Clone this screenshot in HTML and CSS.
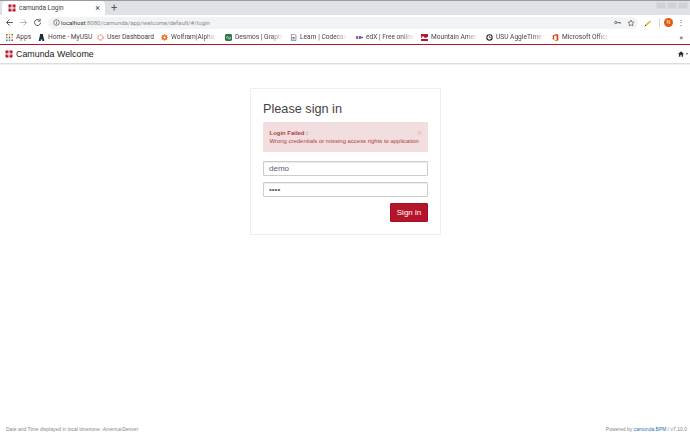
FILE: index.html
```html
<!DOCTYPE html>
<html lang="en">
<head>
<meta charset="utf-8">
<title>camunda Login</title>
<link rel="stylesheet" href="styles.css">
</head>
<body>
<div class="chrome">
  <div class="tabstrip">
    <div class="tab">
      <svg class="logo-s" viewBox="0 0 16 16"><path fill="#b5152b" d="M1 1h6v6H1zM9 1h6v6H9zM1 9h6v6H1zM9 9h6v6H9z"/><path fill="#fff" d="M5 5h2v2H5zM9 5h2v2H9zM5 9h2v2H5zM9 9h2v2H9z"/></svg>
      <span class="tab-title">camunda Login</span>
      <span class="tab-x">×</span>
    </div>
    <span class="new-tab">+</span>
    <div class="win-btns"><i></i><i></i><i></i></div>
  </div>
  <div class="toolbar">
    <svg class="nav" viewBox="0 0 12 12"><path d="M10.500 6H2M6 2 2 6l4 4" fill="none" stroke="#555" stroke-width="1.300"/></svg>
    <svg class="nav" viewBox="0 0 12 12"><path d="M1.500 6H10M6 2l4 4-4 4" fill="none" stroke="#b4b4b4" stroke-width="1.300"/></svg>
    <svg class="nav" viewBox="0 0 12 12"><path d="M10 6a4 4 0 1 1-1.200-2.800M9.500 1v3h-3" fill="none" stroke="#555" stroke-width="1.300"/></svg>
    <div class="omnibox">
      <svg class="info" viewBox="0 0 10 10"><circle cx="5" cy="5" r="4" fill="none" stroke="#555"/><path d="M5 4.500v3M5 2.500v1" stroke="#555"/></svg>
      <span class="url"><b>localhost</b>:8080/camunda/app/welcome/default/#/login</span>
      <svg class="omni-ico key" viewBox="0 0 12 8"><circle cx="3" cy="4" r="2" fill="none" stroke="#555" stroke-width="1.400"/><path d="M5 4h6M9 4v2M11 4v2" stroke="#555" stroke-width="1.200"/></svg>
      <svg class="omni-ico" viewBox="0 0 12 12"><path d="m6 1.500 1.400 3 3.200.4-2.400 2.200.6 3.200L6 8.700l-2.800 1.600.6-3.200-2.400-2.200 3.200-.4z" fill="none" stroke="#555"/></svg>
    </div>
    <svg class="pencil" viewBox="0 0 12 12"><path d="m2 10 8-7" stroke="#e2b420" stroke-width="2.400"/><path d="m1 11 2-2" stroke="#333" stroke-width="1.400"/></svg>
    <span class="sep"></span>
    <span class="avatar">N</span>
    <span class="dots">⋮</span>
  </div>
  <div class="bookmarks">
    <span class="bm bm-apps"><svg viewBox="0 0 9 9"><path fill="#d93025" d="M0 0h2v2H0z"/><path fill="#f4b400" d="M3.500 0h2v2h-2z"/><path fill="#0f9d58" d="M7 0h2v2H7z"/><path fill="#4285f4" d="M0 3.500h2v2H0z"/><path fill="#d93025" d="M3.500 3.500h2v2h-2z"/><path fill="#f4b400" d="M7 3.500h2v2H7z"/><path fill="#0f9d58" d="M0 7h2v2H0z"/><path fill="#4285f4" d="M3.500 7h2v2h-2z"/><path fill="#d93025" d="M7 7h2v2H7z"/></svg>Apps</span>
    <span class="bm bm-home"><svg viewBox="0 0 9 9"><path fill="#1d2a44" d="M2.500 0h4v2L8 8v1H5.500V7h-2v2H1V8l1.500-6z"/></svg>Home - MyUSU</span>
    <span class="bm bm-user"><svg viewBox="0 0 10 10"><circle cx="5" cy="5" r="3.700" fill="none" stroke="#e8552a" stroke-width="1.300" stroke-dasharray="3 1"/></svg>User Dashboard</span>
    <span class="bm bm-wolf"><svg viewBox="0 0 10 10"><path fill="#ef6c1a" d="m5 0 1.500 2 2.500-.5L8.500 4 10 5 8.500 6.200 9 8.500 6.500 8 5 10 3.500 8 1 8.500 1.500 6 0 5l1.500-1L1 1.500 3.500 2z"/><circle cx="5" cy="5" r="1.500" fill="#fff"/></svg><span class="fade">Wolfram|Alpha:</span></span>
    <span class="bm bm-desmos"><svg viewBox="0 0 10 10"><rect width="10" height="10" rx="2" fill="#2f7a44"/><path d="M2 6c1-3 2-3 3 0s2 1 3-2" stroke="#fff" fill="none"/></svg><span class="fade">Desmos | Graphi</span></span>
    <span class="bm bm-learn"><svg viewBox="0 0 10 10"><path d="M2 .5h5l1.500 2v7H2z" fill="#fff" stroke="#5a6a80"/><path d="M3.500 5h3M3.500 7h3" stroke="#1d2a44"/></svg><span class="fade">Learn | Codecad</span></span>
    <span class="bm bm-edx"><svg viewBox="0 0 10 6"><path d="M0 1h3v4H0z" fill="#d23f6c"/><path d="M4 1h3v4H4z" fill="#2a6cb8"/><path d="M7 2h3v2H7z" fill="#8a3f8f"/></svg><span class="fade">edX | Free online</span></span>
    <span class="bm bm-mtn"><svg viewBox="0 0 10 10"><path d="M0 0h10v10H0z" fill="#a81e35"/><path d="M0 6 3 3l3 3 4-2v3H0z" fill="#fff"/></svg><span class="fade">Mountain Ameri</span></span>
    <span class="bm bm-time"><svg viewBox="0 0 10 10"><circle cx="5" cy="5" r="3.800" fill="none" stroke="#222" stroke-width="1.500"/><path d="M5 3v2.300h2" fill="none" stroke="#222"/></svg><span class="fade">USU AggieTime -</span></span>
    <span class="bm bm-office"><svg viewBox="0 0 10 10"><path d="M1 2 6.500 0 9 1v8l-2.500 1L1 8l5.500 .8V2L3 3v4.500L1 8z" fill="#e0421c"/></svg><span class="fade">Microsoft Office</span></span>
    <span class="bm-more">»</span>
  </div>
</div>
<header class="navbar">
  <svg class="logo-l" viewBox="0 0 16 16"><path fill="#b5152b" d="M1 1h6v6H1zM9 1h6v6H9zM1 9h6v6H1zM9 9h6v6H9z"/><path fill="#fff" d="M5 5h2v2H5zM9 5h2v2H9zM5 9h2v2H5zM9 9h2v2H9z"/></svg>
  <span class="brand">Camunda Welcome</span>
  <span class="home">
    <svg viewBox="0 0 10 9"><path fill="#333" d="M5 0 10 4.500H8.500V9H6V6H4v3H1.500V4.500H0z"/></svg>
    <i class="caret"></i>
  </span>
</header>
<main class="main">
  <form class="card">
    <h2 class="title">Please sign in</h2>
    <div class="alert">
      <span class="alert-x">×</span>
      <strong>Login Failed :</strong>
      <span class="alert-msg">Wrong credentials or missing access rights to application</span>
    </div>
    <input class="field field-user" type="text" value="demo">
    <input class="field field-pass" type="password" value="demo">
    <div class="actions"><button class="btn" type="button">Sign in</button></div>
  </form>
</main>
<footer class="footer">
  <span class="tz">Date and Time displayed in local timezone: <em>America/Denver</em></span>
  <span>Powered by <a class="link">camunda BPM</a> / v7.10.0</span>
</footer>
</body>
</html>
```
FILE: styles.css
```css
* { box-sizing: border-box; }
html, body { height: 100%; }
body {
  margin: 0;
  height: 434px;
  overflow: hidden;
  display: flex;
  flex-direction: column;
  background: #fff;
  font-family: "Liberation Sans", Arial, sans-serif;
  color: #333;
}
.chrome { flex: none; border-top: 1px solid #9a9a9a; }
.tabstrip {
  height: 14px;
  background: #dee1e6;
  display: flex;
  align-items: stretch;
  font-family: Roboto, "Noto Sans", sans-serif;
}
.tab {
  width: 103px;
  margin-left: 2px;
  background: #fff;
  border-radius: 4px 4px 0 0;
  display: flex;
  align-items: center;
  padding: 0 5px 0 6px;
}
.logo-s { width: 8px; height: 8px; flex: none; }
.tab-title { margin-left: 3px; font-size: 6.5px; color: #3c4043; flex: 1; white-space: nowrap; }
.tab-x { font-size: 9px; color: #444; }
.new-tab { margin-left: 6px; font-size: 11px; line-height: 14px; color: #555; }
.win-btns { margin-left: auto; margin-right: 2px; display: flex; gap: 1px; padding-top: 1px; }
.win-btns i { width: 10px; height: 7px; background: #cfd1d5; border: 1px solid #d8dade; }
.toolbar {
  height: 15px;
  background: #fff;
  display: flex;
  align-items: center;
  padding-left: 5px;
  padding-right: 4px;
}
.nav { width: 9px; height: 9px; margin-right: 5px; flex: none; }
.nav:nth-child(3) { margin-right: 6px; }
.omnibox {
  width: 590px;
  height: 12px;
  flex: none;
  background: #f1f3f4;
  border-radius: 6px;
  display: flex;
  align-items: center;
  padding: 0 3px 0 3px;
}
.info { width: 7px; height: 7px; flex: none; margin-left: 2px; }
.url { margin-left: 1px; font-size: 6px; color: #8a8d91; flex: 1; font-family: Roboto, sans-serif; white-space: nowrap; }
.url b { color: #333; font-weight: 400; }
.omni-ico { width: 8px; height: 8px; margin-left: 6px; flex: none; }
.key { width: 7px; height: 5px; }
.pencil { width: 8px; height: 8px; margin-left: 6px; flex: none; }
.sep { width: 1px; height: 9px; background: #d5d5d5; margin-left: 7px; }
.avatar {
  width: 9px; height: 9px;
  margin-left: 4px;
  border-radius: 50%;
  background: #e8590c;
  color: #fff;
  font-size: 5px;
  line-height: 9px;
  text-align: center;
}
.dots { margin-left: 4px; font-size: 8px; color: #555; line-height: 9px; }
.bookmarks {
  height: 15px;
  background: #fff;
  display: flex;
  align-items: center;
  padding-left: 6px;
  padding-right: 7px;
  font-family: Roboto, "Noto Sans", sans-serif;
  font-size: 6.6px;
  color: #444;
  white-space: nowrap;
  border-bottom: 1.5px solid #b5152b;
}
.bm { display: flex; align-items: center; gap: 3px; flex: none; }
.bm svg { width: 7px; height: 7px; flex: none; }
.fade {
  -webkit-mask-image: linear-gradient(to right, #000 75%, transparent);
  mask-image: linear-gradient(to right, #000 75%, transparent);
}
.bm-apps { width: 32px; }
.bm-home { width: 59px; }
.bm-user { width: 64px; }
.bm-wolf { width: 64px; }
.bm-desmos { width: 65px; }
.bm-learn { width: 66px; }
.bm-edx { width: 65px; }
.bm-mtn { width: 65px; }
.bm-time { width: 66px; }
.bm-office { width: 60px; }
.bm-more { margin-left: auto; font-size: 8px; }
.navbar {
  flex: none;
  height: 19px;
  display: flex;
  align-items: center;
  padding: 0 2px 0 5px;
  border-bottom: 1px solid #ddd;
  box-shadow: 0 1px 1px rgba(0,0,0,.05);
}
.logo-l { width: 8px; height: 8px; flex: none; }
.brand { margin-left: 3px; font-size: 8.9px; color: #222; }
.home { margin-left: auto; display: flex; align-items: center; gap: 2px; }
.home svg { width: 6px; height: 6px; }
.caret { border: 1.5px solid transparent; border-top: 2px solid #555; border-bottom: 0; }
.main { flex: 1; display: flex; flex-direction: column; align-items: center; padding-top: 24px; }
.card {
  width: 191px;
  height: 147px;
  margin-left: 1px;
  border: 1px solid #eee;
  padding: 11px 12px 0 12px;
  display: flex;
  flex-direction: column;
}
.title {
  margin: 0;
  font-family: "Liberation Sans", sans-serif;
  font-weight: 400;
  font-size: 12.7px;
  line-height: 18px;
  color: #444;
}
.alert {
  margin-top: 4px;
  height: 30px;
  background: #f2dede;
  color: #a94442;
  font-family: "Liberation Sans", sans-serif;
  font-size: 5.95px;
  line-height: 8px;
  padding: 7px 6px 0 6.500px;
  position: relative;
  display: flex;
  flex-direction: column;
  white-space: nowrap;
}
.alert-x { position: absolute; right: 6px; top: 7px; font-size: 9px; line-height: 8px; color: #d9c0c0; }
.field {
  display: block;
  width: 100%;
  height: 15px;
  margin-top: 6px;
  padding: 0 5px;
  border: 1px solid #ccc;
  border-radius: 1px;
  background: #fff;
  box-shadow: inset 0 1px 1px rgba(0,0,0,.08);
  font-family: "Liberation Sans", sans-serif;
  font-size: 8px;
  color: #55606e;
  outline: none;
}
.field-user { margin-top: 9px; }
.actions { margin-top: 6px; display: flex; justify-content: flex-end; }
.btn {
  width: 38px;
  height: 19px;
  padding: 0;
  background: #b5152b;
  border: 1px solid #a11226;
  border-radius: 1px;
  color: #fff;
  font-family: "Liberation Sans", sans-serif;
  font-size: 8px;
}
.footer {
  flex: none;
  height: 14px;
  display: flex;
  justify-content: space-between;
  align-items: center;
  padding: 4px 3px 0 6px;
  font-size: 5px;
  color: #888;
  font-family: "Liberation Sans", sans-serif;
}
.link { color: #2f6fb5; }
```
